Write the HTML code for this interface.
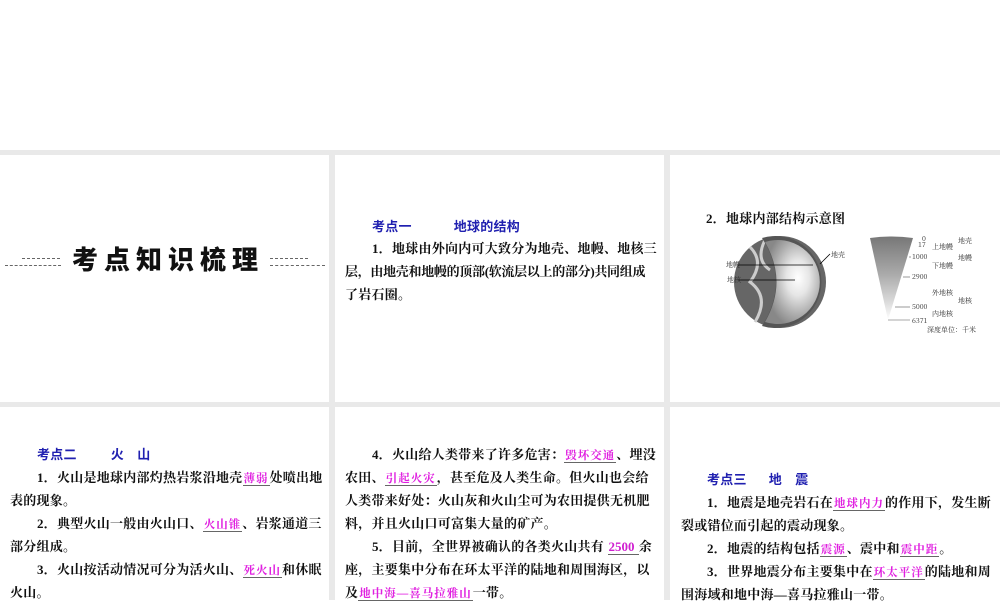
<!DOCTYPE html><html><head><meta charset="utf-8"><style>
body{margin:0;width:1000px;height:600px;background:#fff;position:relative;overflow:hidden;font-family:"Liberation Serif","Noto Serif CJK SC",serif;}
.band{position:absolute;left:0;top:150px;width:1000px;height:450px;background:#e9e9e9}
.p{position:absolute;background:#fff;overflow:hidden}
.l{position:absolute;white-space:nowrap;font-size:13px;color:#111;font-weight:bold;letter-spacing:0.25px}
.h{color:#2020b0;font-family:"Liberation Sans","Noto Sans CJK SC",sans-serif;font-weight:bold;font-size:13px}
.m{color:#e020e0;border-bottom:1px solid #666;font-size:11.5px;padding:0 1px;letter-spacing:1px}
.t{position:absolute;left:72px;top:240px;font-family:"Noto Sans CJK SC",sans-serif;font-weight:900;font-size:26px;letter-spacing:6px;color:#111}
.d{position:absolute;border-top:1px dashed #666;}
.s{font-size:7px;font-family:"Noto Serif CJK SC",serif;fill:#333}
</style></head><body>
<div class="band"></div>
<div class="p" style="left:0;top:155px;width:329px;height:247px"></div>
<div class="p" style="left:335px;top:155px;width:329px;height:247px"></div>
<div class="p" style="left:670px;top:155px;width:330px;height:247px"></div>
<div class="p" style="left:0;top:407px;width:329px;height:193px"></div>
<div class="p" style="left:335px;top:407px;width:329px;height:193px"></div>
<div class="p" style="left:670px;top:407px;width:330px;height:193px"></div>

<div class="d" style="left:22px;top:258px;width:38px"></div>
<div class="d" style="left:5px;top:265px;width:56px"></div>
<div class="t">考点知识梳理</div>
<div class="d" style="left:270px;top:258px;width:38px"></div>
<div class="d" style="left:270px;top:265px;width:55px"></div>

<div class="l h" style="left:372px;top:216px">考点一<span style="margin-left:42px">地球的结构</span></div>
<div class="l" style="left:372px;top:238px">1．地球由外向内可大致分为地壳、地幔、地核三</div>
<div class="l" style="left:345px;top:261px;letter-spacing:-0.3px">层，由地壳和地幔的顶部(软流层以上的部分)共同组成</div>
<div class="l" style="left:345px;top:284px">了岩石圈。</div>

<div class="l" style="left:706px;top:208px">2．地球内部结构示意图</div>
<svg style="position:absolute;left:670px;top:232px" width="330" height="105">
<defs><radialGradient id="g" cx="0.6" cy="0.45" r="0.6"><stop offset="0" stop-color="#fff"/><stop offset="0.35" stop-color="#e6e6e6"/><stop offset="0.75" stop-color="#aaa"/><stop offset="1" stop-color="#888"/></radialGradient>
<linearGradient id="c" x1="0" y1="0" x2="0" y2="1"><stop offset="0" stop-color="#777"/><stop offset="0.45" stop-color="#aaa"/><stop offset="0.8" stop-color="#ddd"/><stop offset="1" stop-color="#fff"/></linearGradient></defs>
<circle cx="110" cy="50" r="46" fill="#666"/>
<path d="M80 15 q15 15 0 35 q20 15 5 40 M95 8 q-10 20 5 30" stroke="#ccc" fill="none" stroke-width="3"/>
<path d="M92 6 A46 46 0 1 1 92 94 Q120 50 92 6 Z" fill="#555"/>
<path d="M95 10 A42 42 0 1 1 95 90 Q118 50 95 10 Z" fill="url(#g)"/>
<line x1="68" y1="33" x2="143" y2="33" stroke="#000" stroke-width="0.8"/><line x1="68" y1="48" x2="125" y2="48" stroke="#000" stroke-width="0.8"/>
<line x1="150" y1="32" x2="160" y2="22" stroke="#000" stroke-width="0.8"/>
<text class="s" x="56" y="35">地幔</text><text class="s" x="57" y="50">地核</text><text class="s" x="161" y="25">地壳</text>
<path d="M200 6 Q222 3 243 6 L218 88 Z" fill="url(#c)"/>
<g stroke="#555" stroke-width="0.6"><line x1="218" y1="88" x2="240" y2="88"/><line x1="225" y1="75" x2="240" y2="75"/><line x1="233" y1="45" x2="240" y2="45"/><line x1="239" y1="25" x2="241" y2="25"/></g>
<g class="s"><text x="252" y="9">0</text><text x="248" y="15">17</text><text x="242" y="27">1000</text><text x="242" y="47">2900</text><text x="242" y="77">5000</text><text x="242" y="91">6371</text>
<text x="262" y="17">上地幔</text><text x="262" y="36">下地幔</text><text x="262" y="63">外地核</text><text x="262" y="84">内地核</text><text x="288" y="11">地壳</text><text x="288" y="28">地幔</text><text x="288" y="71">地核</text><text x="257" y="100">深度单位：千米</text></g>
</svg>

<div class="l h" style="left:37px;top:444px">考点二<span style="margin-left:34px">火　山</span></div>
<div class="l" style="left:37px;top:467px">1．火山是地球内部灼热岩浆沿地壳<span class="m">薄弱</span>处喷出地</div>
<div class="l" style="left:10px;top:490px">表的现象。</div>
<div class="l" style="left:37px;top:513px">2．典型火山一般由火山口、<span class="m">火山锥</span>、岩浆通道三</div>
<div class="l" style="left:10px;top:536px">部分组成。</div>
<div class="l" style="left:37px;top:559px">3．火山按活动情况可分为活火山、<span class="m">死火山</span>和休眠</div>
<div class="l" style="left:10px;top:582px">火山。</div>

<div class="l" style="left:372px;top:444px">4．火山给人类带来了许多危害：<span class="m">毁坏交通</span>、埋没</div>
<div class="l" style="left:345px;top:467px">农田、<span class="m">引起火灾</span>，甚至危及人类生命。但火山也会给</div>
<div class="l" style="left:345px;top:490px">人类带来好处：火山灰和火山尘可为农田提供无机肥</div>
<div class="l" style="left:345px;top:513px">料，并且火山口可富集大量的矿产。</div>
<div class="l" style="left:372px;top:536px">5．目前，全世界被确认的各类火山共有 <span class="m" style="color:#d020d0;font-size:13px;letter-spacing:0">2500 </span>余</div>
<div class="l" style="left:345px;top:559px">座，主要集中分布在环太平洋的陆地和周围海区，以</div>
<div class="l" style="left:345px;top:582px">及<span class="m">地中海—喜马拉雅山</span>一带。</div>

<div class="l h" style="left:707px;top:469px">考点三<span style="margin-left:22px">地　震</span></div>
<div class="l" style="left:707px;top:492px">1．地震是地壳岩石在<span class="m">地球内力</span>的作用下，发生断</div>
<div class="l" style="left:681px;top:515px">裂或错位而引起的震动现象。</div>
<div class="l" style="left:707px;top:538px">2．地震的结构包括<span class="m">震源</span>、震中和<span class="m">震中距</span>。</div>
<div class="l" style="left:707px;top:561px">3．世界地震分布主要集中在<span class="m">环太平洋</span>的陆地和周</div>
<div class="l" style="left:681px;top:584px">围海域和地中海—喜马拉雅山一带。</div>
</body></html>
